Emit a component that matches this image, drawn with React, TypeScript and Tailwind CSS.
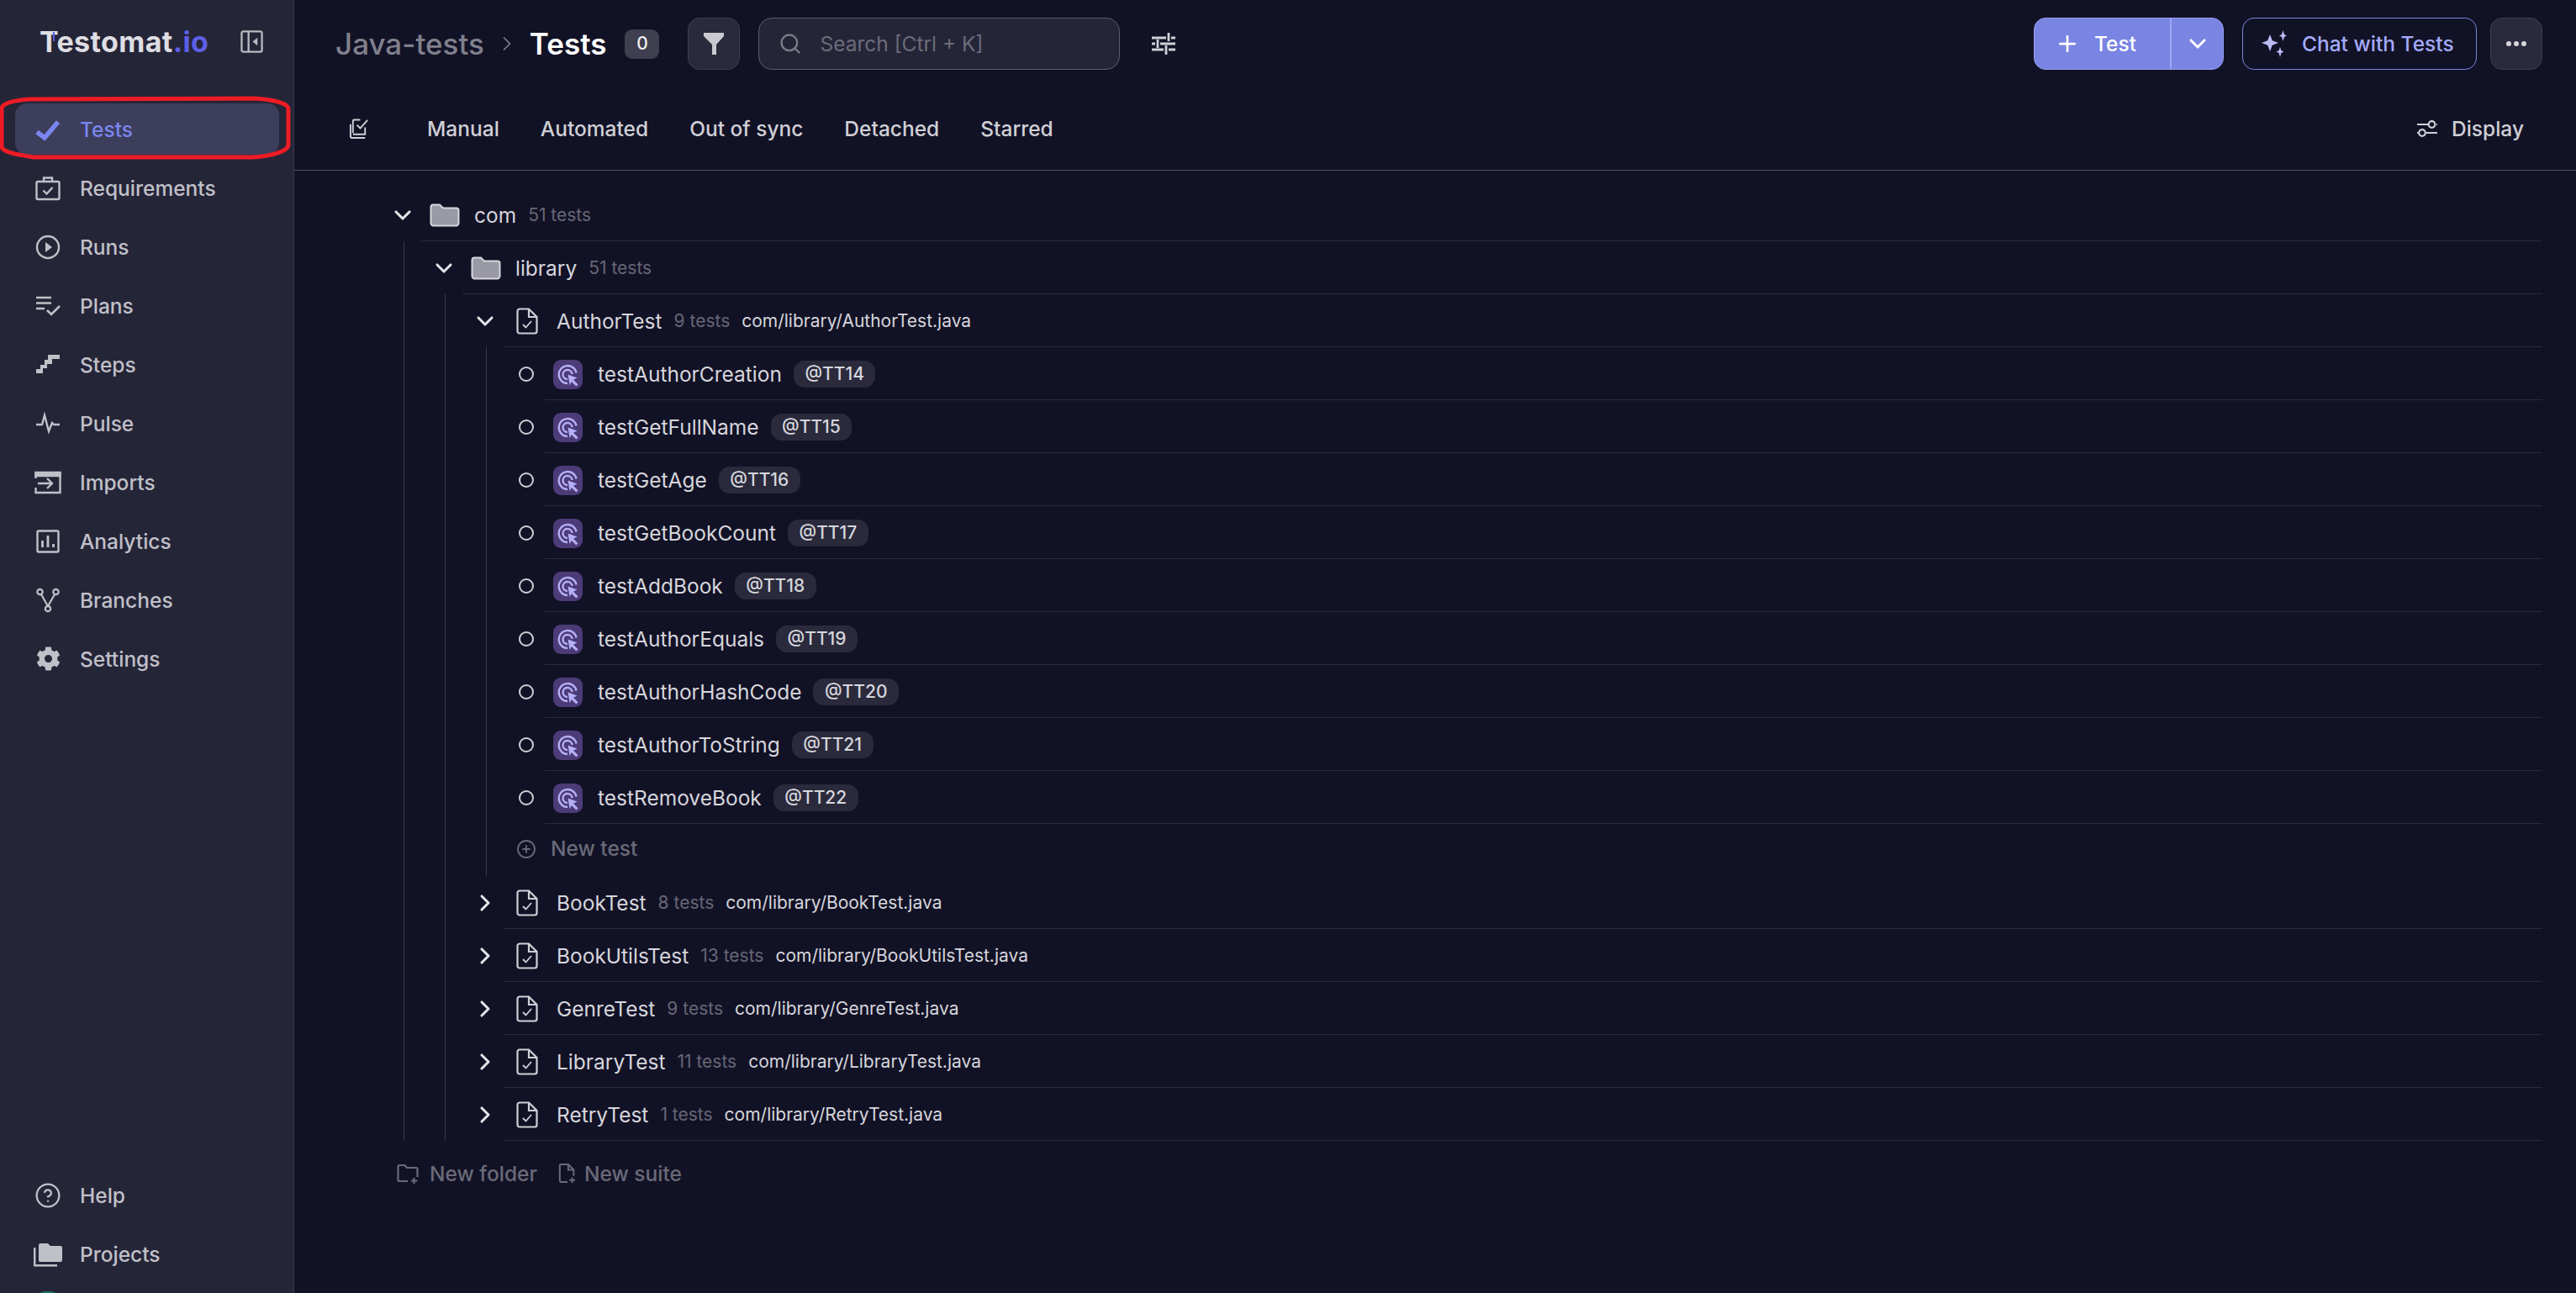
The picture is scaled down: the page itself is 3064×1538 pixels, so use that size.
import { ChevronDown, ChevronRight, CirclePlus, CircleHelp, Plus, Search } from 'lucide-react'
import { FaCog } from 'react-icons/fa'
import type { ReactNode } from 'react'

type IconProps = { className?: string }

const CheckIcon = ({ className }: IconProps) => (
  <svg viewBox="0 0 30 30" className={className} fill="none" stroke="currentColor" strokeWidth="5.6">
    <path d="M2 18l9 7L27 6" />
  </svg>
)
const BriefcaseIcon = ({ className }: IconProps) => (
  <svg viewBox="0 0 30 30" className={className} fill="none" stroke="currentColor" strokeWidth="2.4">
    <rect x="1.5" y="7" width="27" height="21" rx="1.5" />
    <path d="M10 7V2.5h10V7" />
    <path d="M9.5 17.5l4 4 7-7.5" />
  </svg>
)
const RunsIcon = ({ className }: IconProps) => (
  <svg viewBox="0 0 30 30" className={className} fill="none" stroke="currentColor" strokeWidth="2.4">
    <circle cx="15" cy="15" r="13" />
    <path d="M12 9l8 6-8 6z" fill="currentColor" stroke="none" />
  </svg>
)
const PlansIcon = ({ className }: IconProps) => (
  <svg viewBox="0 0 30 30" className={className} fill="none" stroke="currentColor" strokeWidth="2.6">
    <path d="M1 5h18M1 11.5h18M1 18h10" />
    <path d="M14 20l5 5 10-10" />
  </svg>
)
const StepsIcon = ({ className }: IconProps) => (
  <svg viewBox="0 0 30 30" className={className} fill="currentColor">
    <path d="M29 3v5h-9v6h-6v5H9v6H1v-5h5v-5h5V9h4V3z" />
  </svg>
)
const PulseIcon = ({ className }: IconProps) => (
  <svg viewBox="0 0 30 30" className={className} fill="none" stroke="currentColor" strokeWidth="2.4">
    <path d="M1 16h7l3-11 5 19 4-10 2 2h7" />
  </svg>
)
const ImportsIcon = ({ className }: IconProps) => (
  <svg viewBox="0 0 32 30" className={className} fill="none" stroke="currentColor" strokeWidth="2.4">
    <path d="M1.5 10V3h29v24h-29v-6" />
    <path d="M1.5 4h29v3h-29z" fill="currentColor" />
    <path d="M4 16h17M15 10l6 6-6 6" />
  </svg>
)
const AnalyticsIcon = ({ className }: IconProps) => (
  <svg viewBox="0 0 30 30" className={className} fill="none" stroke="currentColor" strokeWidth="2.4">
    <rect x="2.5" y="2.5" width="25" height="25" rx="1.5" />
    <path d="M8.5 22v-8M15 22V8M21.5 22v-4" strokeWidth="2.8" />
  </svg>
)
const BranchesIcon = ({ className }: IconProps) => (
  <svg viewBox="0 0 30 30" className={className} fill="none" stroke="currentColor" strokeWidth="2.2">
    <circle cx="5.5" cy="5" r="3.2" />
    <circle cx="24.5" cy="5" r="3.2" />
    <circle cx="15" cy="25" r="3.2" />
    <path d="M7 8l8 14 8-14" />
  </svg>
)
const ProjectsIcon = ({ className }: IconProps) => (
  <svg viewBox="0 0 36 30" className={className} fill="currentColor">
    <path d="M7 4a2 2 0 0 1 2-2h9l3 3h12a2 2 0 0 1 2 2v15a2 2 0 0 1-2 2H9a2 2 0 0 1-2-2z" />
    <path d="M1 7h2.4v20H29v2.4H1z" />
  </svg>
)
const FolderIcon = ({ className }: IconProps) => (
  <svg viewBox="0 0 36 28" className={className}>
    <path
      d="M1.5 4a2.5 2.5 0 0 1 2.5-2.5h8l4 4h16a2.5 2.5 0 0 1 2.5 2.5v15.500a3 3 0 0 1-3 3H4.500a3 3 0 0 1-3-3z"
      fill="#9a9aa5"
      stroke="#d6d6dc"
      strokeWidth="2"
    />
  </svg>
)
const FileCheckIcon = ({ className }: IconProps) => (
  <svg viewBox="0 0 26 32" className={className} fill="none" stroke="#cfcfd6" strokeWidth="2.2">
    <path d="M4 1.500h11l9.500 9.500v17a2.500 2.500 0 0 1-2.500 2.500H4A2.500 2.500 0 0 1 1.500 28V4A2.500 2.500 0 0 1 4 1.500z" />
    <path d="M15 1.500V11h9.500" />
    <path d="M8 20l3.500 3.500L18 16" strokeWidth="1.800" />
  </svg>
)
const AutoIcon = () => (
  <svg viewBox="0 0 35 35" className="h-[35px] w-[35px] shrink-0 rounded-[9px] bg-[#4d3b78]" fill="none" stroke="#b5b0f7" strokeWidth="2.4">
    <path d="M27.500 15.500A10.500 10.500 0 1 0 17 28" />
    <path d="M22.500 17A5.500 5.500 0 1 0 17 23" />
    <path d="M17.500 17.500l11 4-4.500 2.200 5.500 5.600-2.200 2.200-5.500-5.600-2.200 4.300z" fill="#b5b0f7" stroke="none" />
  </svg>
)

const navItems: { label: string; icon: ReactNode }[] = [
  { label: 'Requirements', icon: <BriefcaseIcon className="h-[30px] w-[30px]" /> },
  { label: 'Runs', icon: <RunsIcon className="h-[30px] w-[30px]" /> },
  { label: 'Plans', icon: <PlansIcon className="h-[30px] w-[30px]" /> },
  { label: 'Steps', icon: <StepsIcon className="h-[30px] w-[30px]" /> },
  { label: 'Pulse', icon: <PulseIcon className="h-[30px] w-[30px]" /> },
  { label: 'Imports', icon: <ImportsIcon className="h-[30px] w-[32px] shrink-0" /> },
  { label: 'Analytics', icon: <AnalyticsIcon className="h-[30px] w-[30px]" /> },
  { label: 'Branches', icon: <BranchesIcon className="h-[30px] w-[30px]" /> },
  { label: 'Settings', icon: <FaCog className="h-[29px] w-[29px]" /> },
]

const NavItem = ({ label, icon, active }: { label: string; icon: ReactNode; active?: boolean }) => (
  <div
    className={`mx-[18px] flex h-[61px] w-[314px] items-center rounded-[14px] pl-[24px] text-[24.5px] font-medium ${
      active ? 'bg-[#3d3d5c] text-[#7b86ee]' : 'text-[#c0c0c8]'
    }`}
  >
    <span className="flex w-[30px] shrink-0 items-center justify-center">{icon}</span>
    <span className="ml-[23px] pt-[1px]">{label}</span>
  </div>
)

const Sidebar = () => (
  <aside className="relative flex h-full w-[350px] shrink-0 flex-col overflow-hidden border-r border-[#3a3a4c] bg-[#252538]">
    <div className="flex h-[123px] shrink-0 items-start pl-[47px] pt-[30px]">
      <span className="relative text-[34px] font-bold leading-[40px] tracking-[0.4px] text-[#dedee2]">
        Testomat<span className="text-[#5b60e6]">.io</span>
        <span className="absolute left-[16px] top-[8px] h-[11px] w-[2px] bg-[#5b60e6]" />
      </span>
      <svg viewBox="0 0 28 28" className="absolute left-[286px] top-[36px] h-[27px] w-[27px]" fill="none" stroke="#b9b9c0" strokeWidth="2.4">
        <rect x="1.500" y="1.500" width="25" height="25" rx="2" />
        <path d="M10 2v24" />
        <path d="M21 9v10l-6-5z" fill="#b9b9c0" stroke="none" />
      </svg>
    </div>
    <div className="flex flex-col gap-[9px]">
      <NavItem label="Tests" active icon={<CheckIcon className="h-[30px] w-[30px]" />} />
      {navItems.map((item) => (
        <NavItem key={item.label} label={item.label} icon={item.icon} />
      ))}
    </div>
    <div className="mt-auto flex flex-col gap-[9px]">
      <NavItem label="Help" icon={<CircleHelp className="h-[32px] w-[32px] shrink-0" strokeWidth={1.7} />} />
      <NavItem label="Projects" icon={<ProjectsIcon className="h-[30px] w-[36px] shrink-0" />} />
      <div className="mb-[-50px] ml-[31px] mt-[5px] h-[52px] w-[52px] rounded-full bg-[#17806a]" />
    </div>
    {/* hand drawn marker around the active item */}
    <svg viewBox="0 0 350 200" className="absolute left-0 top-0 h-[200px] w-[350px]" fill="none" stroke="#ed1c24" strokeWidth="5">
      <path d="M2 128C5 122 20 119 36 118L300 117C322 118 343 122 343 130L343 172C343 180 322 186 300 187L40 187C20 184 4 181 2 175Z" />
    </svg>
  </aside>
)

const Count = ({ children }: { children: ReactNode }) => (
  <span className="ml-[14px] text-[21px] text-[#676775]">{children}</span>
)

const Row = ({ lead, children }: { lead: ReactNode; children: ReactNode }) => (
  <div className="flex">
    <span className="flex w-[46px] shrink-0 items-center justify-center pl-[2px] pt-[1px]">{lead}</span>
    <div className="flex h-[63px] min-w-0 flex-1 items-center border-b border-[#2a2a3b] pl-[10px] pt-[2px]">
      {children}
    </div>
  </div>
)

const Level = ({ children }: { children: ReactNode }) => (
  <div className="ml-[25px] border-l border-[#3a3a4b] pl-[23px]">{children}</div>
)

const Open = () => <ChevronDown className="h-[32px] w-[32px] text-[#e4e4e8]" strokeWidth={2.3} />
const Closed = () => <ChevronRight className="h-[32px] w-[32px] text-[#e4e4e8]" strokeWidth={2.3} />

const FolderRow = ({ name, count }: { name: string; count: string }) => (
  <Row lead={<Open />}>
    <FolderIcon className="h-[28px] w-[36px] shrink-0" />
    <span className="ml-[17px] text-[24.5px] text-[#d6d6dc]">{name}</span>
    <Count>{count}</Count>
  </Row>
)

const SuiteRow = ({ name, count, path, open }: { name: string; count: string; path: string; open?: boolean }) => (
  <Row lead={open ? <Open /> : <Closed />}>
    <FileCheckIcon className="ml-[5px] mr-[22px] h-[32px] w-[26px] shrink-0" />
    <span className="text-[24.5px] text-[#d6d6dc]">{name}</span>
    <Count>{count}</Count>
    <span className="ml-[14px] text-[21px] text-[#d6d6dc]">{path}</span>
  </Row>
)

const tests = [
  ['testAuthorCreation', '@TT14'],
  ['testGetFullName', '@TT15'],
  ['testGetAge', '@TT16'],
  ['testGetBookCount', '@TT17'],
  ['testAddBook', '@TT18'],
  ['testAuthorEquals', '@TT19'],
  ['testAuthorHashCode', '@TT20'],
  ['testAuthorToString', '@TT21'],
  ['testRemoveBook', '@TT22'],
]

const suites = [
  ['BookTest', '8 tests', 'com/library/BookTest.java'],
  ['BookUtilsTest', '13 tests', 'com/library/BookUtilsTest.java'],
  ['GenreTest', '9 tests', 'com/library/GenreTest.java'],
  ['LibraryTest', '11 tests', 'com/library/LibraryTest.java'],
  ['RetryTest', '1 tests', 'com/library/RetryTest.java'],
]

const Tree = () => (
  <div className="pl-[105px] pr-[40px] pt-[21px]">
    <FolderRow name="com" count="51 tests" />
    <Level>
      <FolderRow name="library" count="51 tests" />
      <Level>
        <SuiteRow open name="AuthorTest" count="9 tests" path="com/library/AuthorTest.java" />
        <Level>
          {tests.map(([name, tag]) => (
            <Row key={name} lead={<span className="h-[18px] w-[18px] rounded-full border-2 border-[#cfcfd6]" />}>
              <AutoIcon />
              <span className="ml-[18px] text-[24.5px] text-[#d6d6dc]">{name}</span>
              <span className="ml-[14px] flex h-[32px] items-center rounded-[13px] bg-[#2a2a3c] px-[13.5px] text-[21px] font-medium text-[#d6d6dc]">
                {tag}
              </span>
            </Row>
          ))}
          <div className="flex h-[62px] items-center pb-[3px] text-[#6a6a78]">
            <span className="flex w-[46px] shrink-0 items-center justify-center pl-[2px]">
              <CirclePlus className="h-[24px] w-[24px]" strokeWidth={1.8} />
            </span>
            <span className="ml-[7px] text-[24.5px] font-medium">New test</span>
          </div>
        </Level>
        {suites.map(([name, count, path]) => (
          <SuiteRow key={name} name={name} count={count} path={path} />
        ))}
      </Level>
    </Level>
    <div className="ml-[17px] flex h-[78px] items-center text-[24.5px] font-medium text-[#6a6a78]">
      <svg viewBox="0 0 26 26" className="h-[26px] w-[26px] shrink-0" fill="none" stroke="currentColor" strokeWidth="2.2">
        <path d="M13 22H3a1.500 1.500 0 0 1-1.500-1.500v-16A1.500 1.500 0 0 1 3 3h6l3 3h11a1.500 1.500 0 0 1 1.500 1.500V17" />
        <path d="M20.500 18v7M17 21.500h7.500" />
      </svg>
      <span className="ml-[13px]">New folder</span>
      <svg viewBox="0 0 24 28" className="ml-[25px] h-[28px] w-[22px] shrink-0" fill="none" stroke="currentColor" strokeWidth="2.2">
        <path d="M12 25H4a2 2 0 0 1-2-2V4a2 2 0 0 1 2-2h9l7 7v8" />
        <path d="M13 2v7h7" />
        <path d="M18 19v7M14.500 22.500H22" />
      </svg>
      <span className="ml-[9px]">New suite</span>
    </div>
  </div>
)

const Header = () => (
  <div className="flex h-[104px] shrink-0 items-center pl-[49px] pr-[40px]">
    <span className="text-[35px] font-medium text-[#80808c]">Java-tests</span>
    <ChevronRight className="ml-[13px] h-[28px] w-[28px] text-[#80808c]" strokeWidth={1.5} />
    <span className="ml-[13px] text-[35px] font-semibold text-white">Tests</span>
    <span className="ml-[22px] flex h-[35px] w-[41px] items-center justify-center rounded-[9px] bg-[#3f3f50] text-[21px] font-medium text-[#f0f0f2]">
      0
    </span>
    <button className="ml-[34px] flex h-[62px] w-[62px] items-center justify-center rounded-[14px] border border-[#3e3e50] bg-[#2a2a3c]">
      <svg viewBox="0 0 26 28" className="h-[28px] w-[26px]" fill="#c9c9d0">
        <path d="M1 1h24v4l-9 10v12h-5V15L1 5z" />
      </svg>
    </button>
    <div className="ml-[22px] flex h-[62px] w-[430px] items-center rounded-[16px] border border-[#5d5d6b] bg-[#252538] pl-[23px]">
      <Search className="h-[28px] w-[28px] text-[#7d7d89]" strokeWidth={2} />
      <span className="ml-[21px] pt-[1px] text-[24.5px] text-[#6c6c79]">Search [Ctrl + K]</span>
    </div>
    <svg viewBox="0 0 28 28" className="ml-[38px] h-[28px] w-[28px]" fill="none" stroke="#d0d0d6" strokeWidth="2.8">
      <path d="M0 7h17M23 7h5M20 1v10M0 14h4M10 14h18M7 9v10M0 21h14M20 21h8M17 16v11" />
    </svg>
    <div className="ml-auto flex items-center">
      <div className="flex h-[62px] w-[226px] items-center rounded-[14px] border border-[#959ef0] bg-[#7a84e2] text-white">
        <Plus className="ml-[24px] h-[30px] w-[30px]" strokeWidth={2.2} />
        <span className="ml-[17px] text-[24.5px] font-medium">Test</span>
        <span className="ml-auto flex h-full w-[63px] items-center justify-center border-l-2 border-[#9ea6f2]">
          <ChevronDown className="h-[32px] w-[32px]" strokeWidth={2.3} />
        </span>
      </div>
      <div className="ml-[22px] flex h-[62px] w-[279px] items-center rounded-[14px] border border-[#7a84e2] text-[24.5px] font-medium text-[#a3abfa]">
        <svg viewBox="0 0 32 32" className="ml-[21px] h-[32px] w-[32px]" fill="#bcbcf5">
          <path d="M11 5l2.800 7.200L21 15l-7.200 2.800L11 25l-2.800-7.200L1 15l7.200-2.800z" />
          <path d="M26.500 0l1.500 5 3 1.500-3 1.500-1.500 5-1.500-5-3-1.500 3-1.500z" />
          <path d="M23 20l1.400 4 3.100 1.500-3.100 1.500-1.400 5-1.400-5-3.100-1.500 3.100-1.500z" />
        </svg>
        <span className="ml-[17px]">Chat with Tests</span>
      </div>
      <div className="ml-[16px] flex h-[62px] w-[62px] items-center justify-center gap-[3px] rounded-[14px] border border-[#3e3e50] bg-[#2a2a3c]">
        <span className="h-[6px] w-[6px] rounded-full bg-[#d6d6dc]" />
        <span className="h-[6px] w-[6px] rounded-full bg-[#d6d6dc]" />
        <span className="h-[6px] w-[6px] rounded-full bg-[#d6d6dc]" />
      </div>
    </div>
  </div>
)

const Tabs = () => (
  <div className="flex h-[99px] shrink-0 items-center border-b border-[#4c4c5a] pl-[65px] pr-[62px] text-[24.5px] font-medium text-[#d0d0d6]">
    <svg viewBox="0 0 26 26" className="mr-[68px] h-[25px] w-[25px] shrink-0" fill="none" stroke="#cfcfd6" strokeWidth="2">
      <path d="M5 18V3a1.500 1.500 0 0 1 1.500-1.500H14" />
      <path d="M2 7v14.500A2.500 2.500 0 0 0 4.500 24H20" />
      <path d="M20 11v8.500H5" />
      <path d="M10 8l4 4 9-10" />
    </svg>
    <div className="flex gap-[49px]">
      <span>Manual</span>
      <span>Automated</span>
      <span>Out of sync</span>
      <span>Detached</span>
      <span>Starred</span>
    </div>
    <div className="ml-auto flex items-center">
      <svg viewBox="0 0 26 24" className="mr-[16px] h-[24px] w-[26px]" fill="none" stroke="#cfcfd6" strokeWidth="2.200">
        <path d="M1 7h13M24 7h1M1 17h1M12 17h13" />
        <circle cx="18.500" cy="7" r="3.800" />
        <circle cx="7" cy="17" r="3.800" />
      </svg>
      <span>Display</span>
    </div>
  </div>
)

export default function App() {
  return (
    <div className="flex h-[1538px] w-[3064px] overflow-hidden bg-[#121226] font-['Inter',sans-serif]">
      <Sidebar />
      <main className="flex min-w-0 flex-1 flex-col">
        <Header />
        <Tabs />
        <Tree />
      </main>
    </div>
  )
}
